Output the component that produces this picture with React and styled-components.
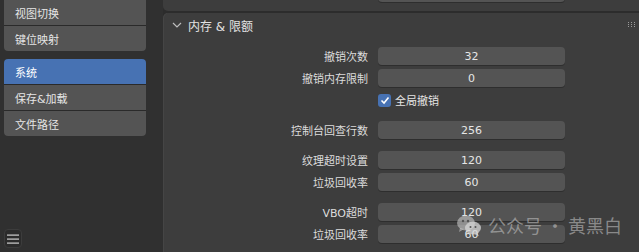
import React from "react";
import styled, { createGlobalStyle } from "styled-components";

const GlobalStyle = createGlobalStyle`
  html, body {
    margin: 0;
    padding: 0;
    background: #303030;
  }
  body {
    font-family: "DejaVu Sans", "Noto Sans CJK SC", sans-serif;
    font-size: 11px;
    color: #e0e0e0;
  }
`;

const Window = styled.div`
  position: relative;
  display: flex;
  width: 639px;
  height: 252px;
  overflow: hidden;
  background: #303030;
`;

const Sidebar = styled.nav`
  width: 142px;
  padding: 0 17px 4px 4px;
  display: flex;
  flex-direction: column;
  gap: 8px;
`;

const NavGroup = styled.div`
  display: flex;
  flex-direction: column;
  border-radius: 4px;
  overflow: hidden;
  background: #2a2a2a;
  gap: 1px;
  ${(p) => p.$first && "border-top-left-radius: 0; border-top-right-radius: 0;"}
`;

const NavItem = styled.div`
  height: 25px;
  display: flex;
  align-items: center;
  padding-left: 11px;
  background: ${(p) => (p.$active ? "#4772b3" : "#545454")};
  color: ${(p) => (p.$active ? "#ffffff" : "#e6e6e6")};
`;

const MenuButton = styled.div`
  margin-top: auto;
  width: 18px;
  height: 19px;
  box-sizing: border-box;
  border: 1px solid #3c3c3c;
  border-radius: 4px;
  background: #2b2b2b;
  display: flex;
  align-items: center;
  justify-content: center;
`;

const Main = styled.main`
  flex: 1;
  display: flex;
  flex-direction: column;
  gap: 2px;
  background: #2c2c2c;
`;

const PrevPanel = styled.section`
  height: 11px;
  background: #3d3d3d;
  border-radius: 0 0 0 5px;
  display: flex;
  overflow: hidden;
  padding-left: 215px;
`;

const Panel = styled.section`
  flex: 1;
  background: #3d3d3d;
  border-radius: 5px 0 0 0;
  box-shadow: inset 1px 0 0 #454545;
`;

const PanelHeader = styled.header`
  height: 24px;
  display: flex;
  align-items: center;
  padding-left: 9px;
  padding-right: 3px;
  gap: 6px;
  font-size: 12px;
  color: #e2e2e2;
`;

const HeaderTitle = styled.span`
  flex: 1;
`;

const PanelBody = styled.div`
  padding-top: 10px;
  display: flex;
  flex-direction: column;
  gap: 12px;
`;

const Group = styled.div`
  display: flex;
  flex-direction: column;
  gap: 4px;
`;

const Row = styled.div`
  display: flex;
  align-items: center;
  height: 18px;
  gap: 10px;
`;

const Label = styled.div`
  width: 205px;
  text-align: right;
  color: #dcdcdc;
`;

const Field = styled.div`
  width: 187px;
  height: 18px;
  flex-shrink: 0;
  border-radius: 4px;
  background: #545454;
  box-shadow: 0 1px 0 #2e2e2e;
  display: flex;
  align-items: center;
  justify-content: center;
  color: #e6e6e6;
  margin-top: ${(p) => p.$offset || 0}px;
`;

const CheckLabel = styled.label`
  display: flex;
  align-items: center;
  gap: 4px;
  margin-left: 215px;
  color: #e6e6e6;
`;

const CheckBox = styled.span`
  width: 13px;
  height: 13px;
  border-radius: 3px;
  background: #4772b3;
  display: flex;
  align-items: center;
  justify-content: center;
`;

const Watermark = styled.div`
  position: absolute;
  left: 456px;
  top: 212px;
  display: flex;
  align-items: center;
  gap: 6px;
  font-family: "Noto Sans CJK SC", sans-serif;
  font-size: 18px;
  color: rgba(190, 190, 190, 0.6);
  pointer-events: none;
`;

const Chevron = () => (
  <svg width="10" height="6" viewBox="0 0 10 6">
    <path d="M1 1 L5 5 L9 1" fill="none" stroke="#bdbdbd" strokeWidth="1.2" />
  </svg>
);

const Grip = () => (
  <svg width="8" height="6" viewBox="0 0 8 6">
    {[0, 3, 6].map((x) =>
      [0, 2, 4].map((y) => (
        <rect key={`${x}-${y}`} x={x} y={y} width="1" height="1" fill="#9a9a9a" />
      ))
    )}
  </svg>
);

const Hamburger = () => (
  <svg width="12" height="10" viewBox="0 0 12 10">
    <rect x="0" y="0.5" width="12" height="1.2" fill="#cfcfcf" />
    <rect x="0" y="4.5" width="12" height="1.2" fill="#cfcfcf" />
    <rect x="0" y="8.5" width="12" height="1.2" fill="#cfcfcf" />
  </svg>
);

const WeChat = () => (
  <svg width="26" height="22" viewBox="0 0 26 22">
    <ellipse cx="10" cy="9" rx="9" ry="7.5" fill="rgba(200,200,200,0.6)" />
    <path d="M4 14 L3 18 L8 15 Z" fill="rgba(200,200,200,0.6)" />
    <ellipse cx="17" cy="14" rx="8" ry="6.5" fill="rgba(215,215,215,0.75)" />
    <path d="M21 19 L23 22 L18 20 Z" fill="rgba(215,215,215,0.75)" />
    <circle cx="7" cy="7" r="1.2" fill="#555" />
    <circle cx="12" cy="7" r="1.2" fill="#555" />
    <circle cx="14.5" cy="13" r="1" fill="#555" />
    <circle cx="19.5" cy="13" r="1" fill="#555" />
  </svg>
);

const fields = [
  [
    ["撤销次数", "32"],
    ["撤销内存限制", "0"],
  ],
  [["控制台回查行数", "256"]],
  [
    ["纹理超时设置", "120"],
    ["垃圾回收率", "60"],
  ],
  [
    ["VBO超时", "120"],
    ["垃圾回收率", "60"],
  ],
];

const FieldRow = ({ label, value }) => (
  <Row>
    <Label>{label}</Label>
    <Field>{value}</Field>
  </Row>
);

export default function App() {
  return (
    <Window>
      <GlobalStyle />
      <Sidebar>
        <NavGroup $first>
          <NavItem>视图切换</NavItem>
          <NavItem>键位映射</NavItem>
        </NavGroup>
        <NavGroup>
          <NavItem $active>系统</NavItem>
          <NavItem>保存&amp;加载</NavItem>
          <NavItem>文件路径</NavItem>
        </NavGroup>
        <MenuButton>
          <Hamburger />
        </MenuButton>
      </Sidebar>
      <Main>
        <PrevPanel>
          <Field $offset={-16} />
        </PrevPanel>
        <Panel>
          <PanelHeader>
            <Chevron />
            <HeaderTitle>内存 &amp; 限额</HeaderTitle>
            <Grip />
          </PanelHeader>
          <PanelBody>
            <Group>
              {fields[0].map(([l, v]) => (
                <FieldRow key={l} label={l} value={v} />
              ))}
              <Row>
                <CheckLabel>
                  <CheckBox>
                    <svg width="10" height="9" viewBox="0 0 10 9">
                      <path d="M1.5 4.5 L4 7 L8.5 1.5" fill="none" stroke="#fff" strokeWidth="1.6" />
                    </svg>
                  </CheckBox>
                  全局撤销
                </CheckLabel>
              </Row>
            </Group>
            {fields.slice(1).map((group, i) => (
              <Group key={i}>
                {group.map(([l, v], j) => (
                  <FieldRow key={j} label={l} value={v} />
                ))}
              </Group>
            ))}
          </PanelBody>
        </Panel>
      </Main>
      <Watermark>
        <WeChat />
        <span>公众号 · 黄黑白</span>
      </Watermark>
    </Window>
  );
}
